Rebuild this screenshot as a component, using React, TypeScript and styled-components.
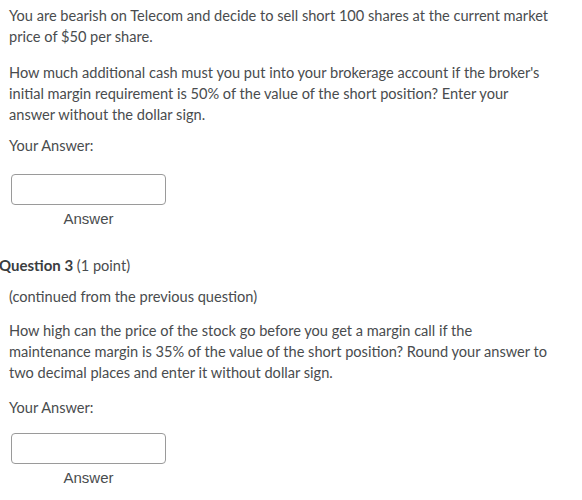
import styled, { createGlobalStyle } from 'styled-components';

const GlobalStyle = createGlobalStyle`
    body {
        margin: 0;
        background: #ffffff;
        font-family: Lato, "Open Sans", sans-serif;
        color: #494c4e;
    }
`;

const Page = styled.div`
    width: 554px;
    padding: 6px 0 0 9px;
    box-sizing: border-box;
`;

const Para = styled.p<{ $top: number }>`
    margin: ${p => p.$top}px 0 0 0;
    font-size: 14.6px;
    line-height: 20.8px;
`;

const AnswerBlock = styled.div<{ $top: number }>`
    margin-top: ${p => p.$top}px;
    margin-left: 2px;
    width: 155px;
    display: flex;
    flex-direction: column;
    align-items: center;
`;

const AnswerInput = styled.input`
    width: 155px;
    height: 31px;
    box-sizing: border-box;
    border: 1px solid #9a9a9a;
    border-radius: 4px;
    background: #ffffff;
    outline: none;
`;

const AnswerLabel = styled.span`
    margin-top: 4px;
    font-family: "Liberation Sans", Arial, sans-serif;
    font-size: 15px;
    line-height: 20px;
`;

const QuestionHeader = styled.h2`
    margin: 24px 0 0 -10px;
    font-size: 15px;
    line-height: 24px;
    font-weight: 700;
    color: #3a3d3f;

    span {
        font-weight: 400;
        font-size: 14.6px;
        color: #494c4e;
    }
`;

const Answer = ({ top }: { top: number }) => (
    <AnswerBlock $top={top}>
        <AnswerInput type="text" />
        <AnswerLabel>Answer</AnswerLabel>
    </AnswerBlock>
);

const App = () => {
    return (
        <>
            <GlobalStyle />
            <Page>
                <Para $top={0}>
                    You are bearish on Telecom and decide to sell short 100 shares at the current market price of $50 per share.
                </Para>
                <Para $top={15.6}>
                    How much additional cash must you put into your brokerage account if the broker's initial margin requirement is 50% of the value of the short position? Enter your answer without the dollar sign.
                </Para>
                <Para $top={10.6}>Your Answer:</Para>
                <Answer top={16.6} />

                <QuestionHeader>
                    Question 3 <span>(1 point)</span>
                </QuestionHeader>
                <Para $top={9.6}>(continued from the previous question)</Para>
                <Para $top={13}>
                    How high can the price of the stock go before you get a margin call if the maintenance margin is 35% of the value of the short position? Round your answer to two decimal places and enter it without dollar sign.
                </Para>
                <Para $top={14.6}>Your Answer:</Para>
                <Answer top={14.6} />
            </Page>
        </>
    );
};

export default App;
